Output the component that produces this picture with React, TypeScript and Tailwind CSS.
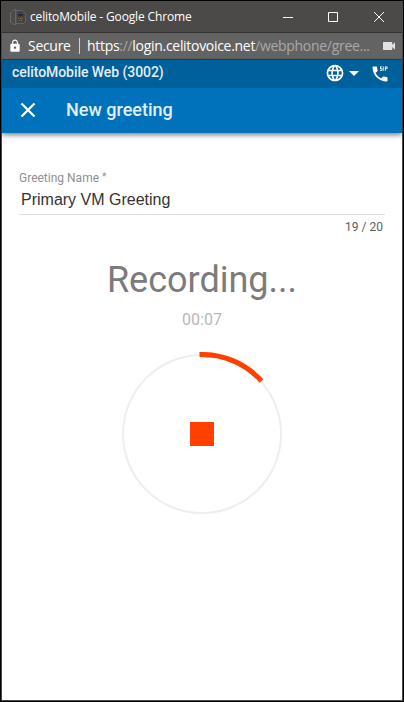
import type { ReactNode } from "react";
import {
  MdArrowDropDown,
  MdDialerSip,
  MdLanguage,
  MdLock,
  MdVideocam,
} from "react-icons/md";

function FaviconPhone() {
  return (
    <svg width="16" height="16" viewBox="0 0 16 16" fill="none">
      <path d="M1.5 3.5 4 .5h1.5v15H4L.5 13V4z" stroke="#6b6967" />
      <path d="M6 1.5h6l3.5 3v8l-2 2H6z" stroke="#656361" fill="#454341" />
      <path d="M9 3h3v1H9z" fill="#34406a" />
      <path d="M8 5h5v2H8z" fill="#262b40" />
      <path d="M8 9h1v1H8zM9 11h1v1H9z" fill="#4d7a4d" />
      <path d="M10 9h2v1h-2zM11 11h1v1h-1z" fill="#8a7040" />
      <path d="M12 9h1v1h-1z" fill="#7d4040" />
    </svg>
  );
}

function TitleBar() {
  return (
    <div className="flex h-8 shrink-0 items-center border-b border-[#353331] bg-[#4c4a48] pl-2">
      <FaviconPhone />
      <span className="ml-1 whitespace-nowrap font-['Open_Sans','Noto_Sans',sans-serif] text-xs leading-4 tracking-[-0.15px] text-white">
        celitoMobile - Google Chrome
      </span>
      <div className="ml-auto flex items-center pr-[18px]">
        <svg width="10" height="10" viewBox="0 0 10 10" stroke="#fff">
          <path d="M0 5.5h10" />
        </svg>
        <svg
          className="ml-[35px]"
          width="10"
          height="10"
          viewBox="0 0 10 10"
          stroke="#fff"
          fill="none"
        >
          <path d="M.5.5h9v9h-9z" />
        </svg>
        <svg className="ml-9" width="10" height="10" viewBox="0 0 10 10" stroke="#fff">
          <path d="m0 0 10 10M10 0 0 10" />
        </svg>
      </div>
    </div>
  );
}

function AddressBar() {
  return (
    <div className="flex h-[27px] shrink-0 items-center border-b border-[#3c3a39] bg-[#636363] pl-1.5 font-['Open_Sans','Noto_Sans',sans-serif] text-sm leading-5 tracking-[-0.3px] text-white">
      <MdLock className="size-3.5" />
      <span className="ml-1.5 w-[42px] whitespace-nowrap">Secure</span>
      <span className="ml-[9px] h-4 w-px bg-[#d0d0d0]" />
      <span className="ml-[7px] whitespace-nowrap">
        https<span className="text-[#a5a5a5]">://</span>login.celitovoice.net
        <span className="text-[#a9a9a9]">/webphone/gree...</span>
      </span>
      <MdVideocam className="ml-auto mr-[5px] size-4 shrink-0 text-[#e2e2e2]" />
    </div>
  );
}

function AppHeader() {
  return (
    <header className="relative shrink-0 text-white shadow-[0_2px_5px_rgba(0,0,0,0.5)]">
      <div className="flex h-7 items-center bg-[#00609c] pl-2.5 pr-3">
        <span className="pb-1 text-sm font-medium leading-5 tracking-[-0.06px] text-[#e4eef5]">
          celitoMobile Web (3002)
        </span>
        <div className="ml-auto flex items-center pb-0.5">
          <MdLanguage className="size-5" />
          <MdArrowDropDown className="-ml-[3px] mr-px size-6" />
          <MdDialerSip className="ml-[3px] mt-0.5 size-5" />
        </div>
      </div>
      <div className="flex h-[45px] items-center bg-[#0072bc] pl-3.5">
        <svg
          className="mb-px"
          width="24"
          height="24"
          viewBox="0 0 24 24"
          stroke="#fff"
          strokeWidth="2.3"
        >
          <path d="m5.5 5.5 13 13M18.5 5.5l-13 13" />
        </svg>
        <h1 className="ml-[26px] pb-px text-lg font-medium leading-6 text-[#e0eef7]">
          New greeting
        </h1>
      </div>
    </header>
  );
}

function Field({ label, count, children }: { label: string; count: string; children: ReactNode }) {
  return (
    <div className="px-[17px]">
      <div className="flex text-xs leading-4 text-[#8f8f8f]">
        {label}
        <span className="ml-[3px] text-[10px] leading-[14px]">*</span>
      </div>
      <div className="border-b border-[#dedede] pl-0.5 font-['Liberation_Sans',Arial,sans-serif] text-base text-[#333]">
        {children}
      </div>
      <div className="pr-0.5 pt-1 text-right text-xs leading-4 text-[#606060]">{count}</div>
    </div>
  );
}

function StopButton() {
  return (
    <button aria-label="Stop" className="mt-[22px]">
      <svg width="164" height="164" viewBox="0 0 164 164" fill="none">
        <circle cx="82" cy="82" r="79" stroke="#eee" strokeWidth="2" />
        <path d="M79.5 2.5A80 80 0 0 1 141.5 29" stroke="#ff4000" strokeWidth="5" />
        <path d="M70 70h24v24H70z" fill="#ff4000" />
      </svg>
    </button>
  );
}

export default function App() {
  return (
    <div className="flex h-[702px] w-[404px] flex-col overflow-hidden border border-black bg-white font-[Roboto,sans-serif]">
      <div className="flex flex-1 flex-col border border-t-0 border-[#4c4a48]">
        <TitleBar />
        <AddressBar />
        <AppHeader />
        <main className="flex flex-1 flex-col pt-[37px]">
          <Field label="Greeting Name" count="19 / 20">
            <div className="h-7 leading-7">Primary VM Greeting</div>
          </Field>
          <div className="mt-[21px] flex flex-col items-center">
            <h2 className="text-4xl font-normal leading-[48px] text-[#7b7b7b]">Recording...</h2>
            <div className="mt-[6px] text-base leading-5 text-[#b8b8b8]">00:07</div>
            <StopButton />
          </div>
        </main>
      </div>
    </div>
  );
}
